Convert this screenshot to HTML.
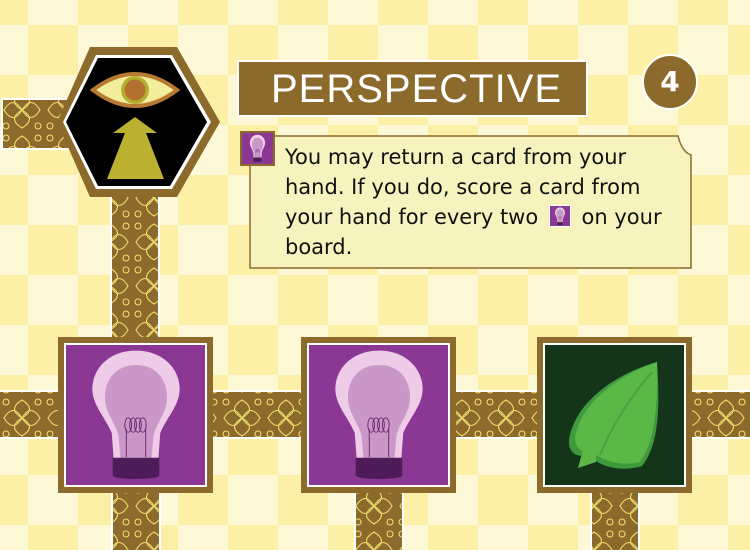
<!DOCTYPE html>
<html><head><meta charset="utf-8"><style>
html,body{margin:0;padding:0;width:750px;height:550px;overflow:hidden}
body{position:relative;font-family:"DejaVu Sans","Liberation Sans",sans-serif}
svg{position:absolute;left:0;top:0}
.title{position:absolute;left:237px;top:60px;height:53px;background:#8b6a2b;border:2px solid #fff;color:#fff;font-family:"Liberation Sans",sans-serif;font-size:40px;line-height:55px;letter-spacing:1px;padding-left:32px;box-sizing:content-box;width:315px;font-weight:normal}
.num{position:absolute;left:642px;top:54px;width:52px;height:52px;border-radius:50%;background:#8b6a2b;border:2px solid #fff;color:#fff;font-size:28px;font-weight:bold;text-align:center;line-height:52px}
.txt{position:absolute;left:285px;top:142px;width:400px;font-size:21px;line-height:30px;color:#111}
.ic{display:inline-block;width:22px;height:22px;vertical-align:-3px;margin:0 4px}
</style></head><body>
<svg width="750" height="550" viewBox="0 0 750 550">
<defs>
<pattern id="chk" width="100" height="100" patternUnits="userSpaceOnUse" x="-22" y="-25">
<rect width="100" height="100" fill="#fdf8d6"/>
<rect width="50" height="50" fill="#fbf0a6"/><rect x="50" y="50" width="50" height="50" fill="#fbf0a6"/>
</pattern>
<pattern id="orn" width="44" height="44" patternUnits="userSpaceOnUse">
<rect width="44" height="44" fill="#8b6a2b"/>
<g fill="none" stroke="#efe070" stroke-width="1.1">
<path d="M22 4 C12 10 12 16 22 22 C32 16 32 10 22 4Z M22 40 C12 34 12 28 22 22 C32 28 32 34 22 40Z"/>
<path d="M4 22 C10 12 16 12 22 22 C16 32 10 32 4 22Z M40 22 C34 12 28 12 22 22 C28 32 34 32 40 22Z"/>
<circle cx="6" cy="6" r="3"/><circle cx="38" cy="6" r="3"/><circle cx="6" cy="38" r="3"/><circle cx="38" cy="38" r="3"/>
</g></pattern>
<g id="bulb">
<path d="M0 -78 C-28 -78 -45 -55 -45 -30 C-45 -10 -32 5 -25 25 L-23 58 L23 58 L25 25 C32 5 45 -10 45 -30 C45 -55 28 -78 0 -78Z" fill="#eecbe6"/>
<path d="M0 -60 C-22 -60 -32 -40 -32 -20 C-32 0 -22 10 -18 28 L-16 56 L16 56 L18 28 C22 10 32 0 32 -20 C32 -40 22 -60 0 -60Z" fill="#c997c8"/>
<g fill="none" stroke="#6a2a70" stroke-width="1"><ellipse cx="-8" cy="15" rx="3.5" ry="9"/><ellipse cx="-3" cy="15" rx="3.5" ry="9"/><ellipse cx="2" cy="15" rx="3.5" ry="9"/><ellipse cx="7" cy="15" rx="3.5" ry="9"/><path d="M-10 20 L-10 55 M10 20 L10 55"/></g>
<path d="M-24 56 L24 56 L24 78 C24 84 -24 84 -24 78Z" fill="#4f1c5a"/>
</g>
</defs>
<rect width="750" height="550" fill="url(#chk)"/>
<rect x="1" y="98" width="70" height="52" fill="#fff"/><rect x="3" y="100" width="66" height="48" fill="url(#orn)"/>
<rect x="110" y="180" width="50" height="170" fill="#fff"/><rect x="112" y="180" width="46" height="170" fill="url(#orn)"/>
<rect x="0" y="390" width="750" height="49" fill="#fff"/><rect x="0" y="392" width="750" height="45" fill="url(#orn)"/>
<rect x="111" y="480" width="50" height="70" fill="#fff"/><rect x="113" y="480" width="46" height="70" fill="url(#orn)"/>
<rect x="354" y="480" width="50" height="70" fill="#fff"/><rect x="356" y="480" width="46" height="70" fill="url(#orn)"/>
<rect x="590" y="480" width="50" height="70" fill="#fff"/><rect x="592" y="480" width="46" height="70" fill="url(#orn)"/>
<polygon points="90,47 177,47 220,122 177,197 90,197 57,122" fill="#8b6a2b"/>
<polygon points="96,55 172,55 211,122 172,189 96,189 63,122" fill="#fff"/>
<polygon points="98,58 170,58 207,122 170,186 98,186 66,122" fill="#000"/>
<path d="M93 90 Q135 58 177 90 Q135 122 93 90Z" fill="#f2ee9c" stroke="#b87a30" stroke-width="4"/>
<circle cx="135" cy="90" r="14" fill="#b3b030"/><circle cx="135" cy="90" r="10.5" fill="#b37031"/>
<polygon points="135,117 113,133 125,133 107,179 164,179 146,133 157,133" fill="#bbb030"/>
<rect x="58" y="337" width="155" height="156" fill="#8b6a2b"/><rect x="64" y="343" width="143" height="144" fill="#fff"/><rect x="66" y="345" width="139" height="140" fill="#8a3894"/>
<g transform="translate(136,413) scale(0.97,0.8)"><use href="#bulb"/></g>
<rect x="301" y="337" width="155" height="156" fill="#8b6a2b"/><rect x="307" y="343" width="143" height="144" fill="#fff"/><rect x="309" y="345" width="139" height="140" fill="#8a3894"/>
<g transform="translate(379,413) scale(0.97,0.8)"><use href="#bulb"/></g>
<rect x="537" y="337" width="155" height="156" fill="#8b6a2b"/><rect x="543" y="343" width="143" height="144" fill="#fff"/><rect x="545" y="345" width="139" height="140" fill="#14351a"/>
<path d="M657 362 C620 372 575 400 569 440 C568 452 576 458 588 455 C602 468 622 472 642 466 C656 448 661 420 657 362Z" fill="#3f9a3e"/>
<path d="M657 362 C622 374 580 402 575 438 C576 450 584 454 592 452 C605 462 622 466 640 462 C652 445 658 420 657 362Z" fill="#5cb846"/>
<path d="M583 450 L578 468 L596 462 L596 452Z" fill="#5cb846"/>
<path d="M600 455 C612 425 632 395 652 372" stroke="#48a040" stroke-width="2" fill="none"/>
<path d="M250 136 L678 136 Q682 152 691 155 L691 268 L250 268Z" fill="#f6f3be" stroke="#8b6a2b" stroke-width="1.5"/>
<rect x="240" y="131" width="35" height="35" fill="#8b6a2b"/><rect x="242" y="133" width="31" height="31" fill="#8a3894"/>
<g transform="translate(257.5,148) scale(0.17)"><use href="#bulb"/></g>
</svg>
<div class="title">PERSPECTIVE</div>
<div class="num">4</div>
<div class="txt">You may return a card from your hand. If you do, score a card from your hand for every two <svg class="ic" style="position:static" width="22" height="22" viewBox="0 0 22 22"><rect width="22" height="22" fill="#fff"/><rect x="1" y="1" width="20" height="20" fill="#8a3894"/><g transform="translate(11,11) scale(0.11)"><use href="#bulb"/></g></svg> on your board.</div>
</body></html>
